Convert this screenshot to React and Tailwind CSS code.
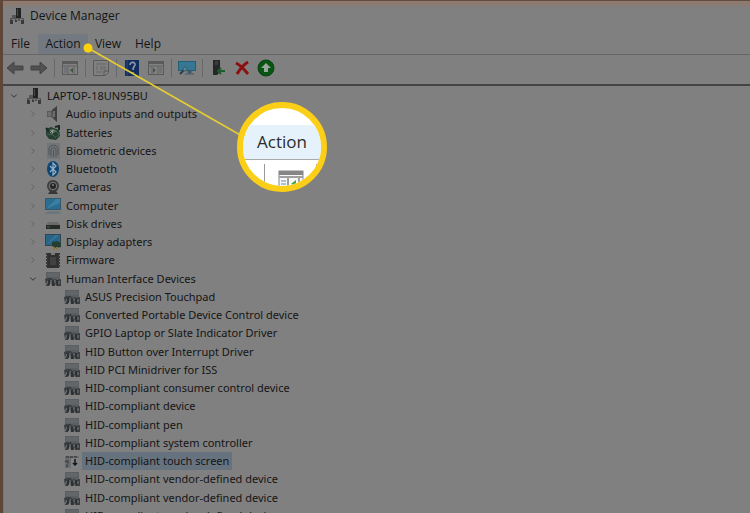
import { ChevronDown, ChevronRight } from 'lucide-react';

function DeviceIcon() {
  return (
    <svg viewBox="0 0 16 16" className="w-4 h-4 shrink-0">
      <rect x="7" y="0" width="5" height="10" fill="#222" />
      <rect x="8" y="1" width="1" height="7" fill="#4a4a4a" />
      <path d="M3 7h4v3H3zM1 10h14v3H1z" fill="#555" />
      <path d="M3 11h3v2H3zM7 11h2v2H7zM11 11h3v2h-3z" fill="#7a7a7a" />
      <path d="M1 12h3v4H1zM6 12h2v2H6zM12 12h3v4h-3z" fill="#3a3a3a" />
    </svg>
  );
}

function AudioIcon() {
  return (
    <svg viewBox="0 0 16 16" className="w-4 h-4">
      <path d="M2 5h4l6-5v16l-6-5H2z" fill="#5a5a5a" />
      <path d="M7 4l5-4v16l-3-3z" fill="#3f3f3f" />
      <path d="M3 6h3v4H3z" fill="#6e6e6e" />
      <path d="M9 5v6" stroke="#6c6c6c" strokeWidth="2" />
    </svg>
  );
}

function BatteryIcon() {
  return (
    <svg viewBox="0 0 16 16" className="w-4 h-4">
      <path d="M1 4l5-2 8 3 1 6-4 4-7-1-3-4z" fill="#263f31" />
      <path d="M3 5l5-1 4 2-4 2z" fill="#5a7565" />
      <path d="M2 9l6 1 3 3M11 6l3 3-2 3" fill="none" stroke="#466552" />
      <path d="M10 2l4-1v4M1 3l3 3" fill="none" stroke="#1c2a22" strokeWidth="2" />
      <path d="M5 8l3-3-1 4" fill="none" stroke="#98a29a" />
    </svg>
  );
}

function BiometricIcon() {
  return (
    <svg viewBox="0 0 16 16" className="w-4 h-4">
      <rect x="2" y="0" width="13" height="16" fill="#717577" />
      <path d="M4 12V6c0-5 9-5 9 0v6M6 14V7c0-3 5-3 5 0v7M8.5 7v7" fill="none" stroke="#505456" />
    </svg>
  );
}

function BluetoothIcon() {
  return (
    <svg viewBox="0 0 16 16" className="w-4 h-4">
      <ellipse cx="8" cy="8" rx="6" ry="8" fill="#0b4779" />
      <path d="M5 5l6 6-3 3V2l3 3-6 6" fill="none" stroke="#9eb0bd" strokeWidth="1.2" />
    </svg>
  );
}

function CameraIcon() {
  return (
    <svg viewBox="0 0 16 16" className="w-4 h-4">
      <path d="M5 12h6l2 3H3z" fill="#363636" />
      <circle cx="8" cy="7" r="6" fill="#3b3b3b" />
      <circle cx="8" cy="7" r="4.3" fill="#707070" />
      <circle cx="8" cy="7" r="3" fill="#252525" />
      <circle cx="8" cy="6" r="1" fill="#8a7b75" />
    </svg>
  );
}

function ComputerIcon() {
  return (
    <svg viewBox="0 0 18 16" className="w-[18px] h-4">
      <rect x="1" y="0" width="16" height="12" fill="#34576b" />
      <rect x="2" y="1" width="14" height="10" fill="#2b6c91" />
      <path d="M2 11l10-10h4v4z" fill="#3c7fa2" />
      <path d="M4 14h10M1 15h16" stroke="#5d717c" />
    </svg>
  );
}

function DiskIcon() {
  return (
    <svg viewBox="0 0 16 16" className="w-4 h-4">
      <path d="M3 6h10l2 3H1z" fill="#6b6b6b" />
      <rect x="1" y="9" width="14" height="4" fill="#262b28" />
      <path d="M2 11h3" stroke="#42694e" />
    </svg>
  );
}

function DisplayIcon() {
  return (
    <svg viewBox="0 0 18 16" className="w-[18px] h-4">
      <rect x="1" y="0" width="16" height="12" fill="#30464f" />
      <rect x="2" y="1" width="14" height="10" fill="#286487" />
      <path d="M2 11l10-10h3z" fill="#3d7a99" />
      <path d="M8 8l5-1 4 2v4l-5 1-4-2z" fill="#243f32" />
      <path d="M10 13v3M13 13v3" stroke="#88763f" strokeWidth="2" />
    </svg>
  );
}

function FirmwareIcon() {
  return (
    <svg viewBox="0 0 16 16" className="w-4 h-4">
      <rect x="2" y="1" width="12" height="15" fill="#303030" />
      <path d="M2 1v15M14 1v15" stroke="#383838" strokeWidth="2" strokeDasharray="2 1" />
      <path d="M6 1h4v2H6z" fill="#777" />
      <path d="M5 5h6v8H5z" fill="#414141" />
    </svg>
  );
}

function HidIcon() {
  return (
    <svg viewBox="0 0 16 16" className="w-4 h-4">
      <path d="M1 1h14v8H1z" fill="#5a5e60" />
      <path d="M2 3h12M2 5h12" stroke="#6a6f72" />
      <path d="M0 8l3-1h4l1 2 2-1 2 1 4-1v7h-4l-1-3-1 3H7l-1-4-2 4H1z" fill="#3a3e41" />
      <path d="M1 14l2-4M6 9v4M10 9v3M14 10v3" stroke="#777b7e" />
      <path d="M4 9v5M8 10v5M12 9v6" stroke="#222527" />
    </svg>
  );
}

function HidDisabledIcon() {
  return (
    <svg viewBox="0 0 16 16" className="w-4 h-4">
      <path d="M1 3h14v12H1z" fill="#6b6e71" />
      <path d="M2 4h12M1 9l3-2v4l-2 4" fill="none" stroke="#484b4e" strokeWidth="2" strokeDasharray="3 1" />
      <rect x="7" y="5" width="8" height="10" fill="#808284" />
      <path d="M11 6v6M9 10l2 2 2-2" fill="none" stroke="#151515" strokeWidth="1.5" />
    </svg>
  );
}

function ArrowIcon({ flip }) {
  return (
    <svg viewBox="0 0 18 16" className={flip ? 'w-[18px] h-4 -scale-x-100' : 'w-[18px] h-4'}>
      <path d="M1 8l7-6v4h9v4H8v4z" fill="#515151" stroke="#424242" />
    </svg>
  );
}

function WindowIcon({ flip }) {
  return (
    <svg viewBox="0 0 18 16" className={flip ? 'w-[18px] h-4 -scale-x-100' : 'w-[18px] h-4'}>
      <rect x="1.5" y="1.5" width="15" height="13" fill="#808080" stroke="#5a5a5a" />
      <path d="M2 3h14" stroke="#5b5b5b" strokeWidth="2" />
      <path d="M7 6v8M13 6v8M2 6h14" stroke="#626262" />
      <path d="M3 8h3M3 10h3M3 12h3" stroke="#5b666f" />
      <path d="M12 8v5L9 10z" fill="#3f5844" />
    </svg>
  );
}

function PropertiesIcon() {
  return (
    <svg viewBox="0 0 18 16" className="w-[18px] h-4">
      <path d="M1.5 0.5h15v12l-3 3h-12z" fill="#808080" stroke="#595959" />
      <path d="M4 4h10M4 7h2M8 7h6M4 9h2M8 9h6M4 12h6" stroke="#666" />
      <path d="M12 15v-4h4" fill="none" stroke="#555" />
    </svg>
  );
}

function HelpIcon() {
  return (
    <svg viewBox="0 0 16 16" className="w-4 h-4">
      <rect x="1" y="0" width="14" height="16" fill="#102d5d" />
      <path d="M3 0v16" stroke="#2f4f7b" />
      <path d="M6 5c0-4 6-3 5 0-1 2-2 2-2 5M9 12v2" fill="none" stroke="#8f9aac" strokeWidth="1.6" />
    </svg>
  );
}

function ScanIcon() {
  return (
    <svg viewBox="0 0 18 16" className="w-[18px] h-4">
      <rect x="0" y="1" width="18" height="10" fill="#245e78" />
      <rect x="1" y="2" width="16" height="8" fill="#347894" />
      <path d="M10 11h3v2h-3zM7 14h9" stroke="#405862" fill="#405862" />
      <path d="M2 14l5-5" stroke="#293f4d" strokeWidth="2" />
      <circle cx="7" cy="9" r="2" fill="#5d8798" stroke="#385b6c" />
    </svg>
  );
}

function UpdateIcon() {
  return (
    <svg viewBox="0 0 16 16" className="w-4 h-4">
      <path d="M3 0h7v12l-3 3H3z" fill="#272727" />
      <path d="M5 2h3M5 4h3" stroke="#555" />
      <path d="M15 11H9M11 8l-3 3 3 3" fill="none" stroke="#1d5a2c" strokeWidth="2" />
    </svg>
  );
}

function RemoveIcon() {
  return (
    <svg viewBox="0 0 16 16" className="w-4 h-4">
      <path d="M2 3c4 2 8 6 12 11M14 2C9 5 6 9 3 14" fill="none" stroke="#8b1010" strokeWidth="3" />
    </svg>
  );
}

function EnableIcon() {
  return (
    <svg viewBox="0 0 18 18" className="w-[18px] h-[18px]">
      <circle cx="9" cy="9" r="8" fill="#075413" stroke="#0a430f" />
      <path d="M9 4l5 5h-3v4H7V9H4z" fill="#9aa69b" />
    </svg>
  );
}

const toolbar = [
  [
    { label: 'Back', icon: <ArrowIcon /> },
    { label: 'Forward', icon: <ArrowIcon flip /> },
  ],
  [{ label: 'Show console tree', icon: <WindowIcon /> }],
  [{ label: 'Properties', icon: <PropertiesIcon /> }],
  [
    { label: 'Help', icon: <HelpIcon /> },
    { label: 'Show action pane', icon: <WindowIcon flip /> },
  ],
  [{ label: 'Scan for hardware changes', icon: <ScanIcon /> }],
  [
    { label: 'Update driver', icon: <UpdateIcon /> },
    { label: 'Uninstall device', icon: <RemoveIcon /> },
    { label: 'Enable device', icon: <EnableIcon /> },
  ],
];

const categories = [
  { name: 'Audio inputs and outputs', icon: <AudioIcon /> },
  { name: 'Batteries', icon: <BatteryIcon /> },
  { name: 'Biometric devices', icon: <BiometricIcon /> },
  { name: 'Bluetooth', icon: <BluetoothIcon /> },
  { name: 'Cameras', icon: <CameraIcon /> },
  { name: 'Computer', icon: <ComputerIcon /> },
  { name: 'Disk drives', icon: <DiskIcon /> },
  { name: 'Display adapters', icon: <DisplayIcon /> },
  { name: 'Firmware', icon: <FirmwareIcon /> },
  { name: 'Human Interface Devices', icon: <HidIcon />, open: true },
];

const hidDevices = [
  'ASUS Precision Touchpad',
  'Converted Portable Device Control device',
  'GPIO Laptop or Slate Indicator Driver',
  'HID Button over Interrupt Driver',
  'HID PCI Minidriver for ISS',
  'HID-compliant consumer control device',
  'HID-compliant device',
  'HID-compliant pen',
  'HID-compliant system controller',
  'HID-compliant touch screen',
  'HID-compliant vendor-defined device',
  'HID-compliant vendor-defined device',
  'HID-compliant vendor-defined device',
];

function Toggle({ open, name }) {
  return (
    <button aria-label={`Toggle ${name}`} className="w-3 mr-1 flex justify-center">
      {open ? (
        <ChevronDown className="w-[10px] h-[10px] text-[#252525]" />
      ) : (
        <ChevronRight className="w-[10px] h-[10px] text-[#5c5c5c]" />
      )}
    </button>
  );
}

function DeviceTree() {
  return (
    <ul className="grid auto-rows-fr h-[438px] mt-px font-['Noto_Sans',sans-serif] text-[11px]">
      <li className="flex items-center pl-1">
        <Toggle open name="LAPTOP-18UN95BU" />
        <span className="w-5 flex justify-center mr-[3px]"><DeviceIcon /></span>
        <span>LAPTOP-18UN95BU</span>
      </li>
      {categories.map((category) => (
        <li key={category.name} className="flex items-center pl-[23px]">
          <Toggle open={category.open} name={category.name} />
          <span className="w-5 flex justify-center mr-[3px]">{category.icon}</span>
          <span>{category.name}</span>
        </li>
      ))}
      {hidDevices.map((name, i) => {
        const selected = name === 'HID-compliant touch screen';
        return (
          <li key={i} className="flex items-stretch pl-[58px]">
            <span className="w-5 flex items-center justify-center">
              {selected ? <HidDisabledIcon /> : <HidIcon />}
            </span>
            <span className={`flex items-center px-[3px] ${selected ? 'bg-[#66737f]' : ''}`}>{name}</span>
          </li>
        );
      })}
    </ul>
  );
}

function Callout() {
  return (
    <div className="absolute inset-y-0 -left-[3px] right-0 pointer-events-none">
      <svg width="340" height="200" className="absolute left-0 top-0">
        <path d="M88 48L242 136" stroke="#e3cb35" strokeWidth="1.8" />
        <circle cx="88" cy="48" r="4.5" fill="#fdd20b" />
      </svg>
      <div className="absolute left-[237px] top-[102px] w-[90px] h-[90px] rounded-full border-6 border-[#fbce17] bg-white overflow-hidden">
        <div className="h-[17px]" />
        <div className="h-[35px] flex items-center justify-center bg-[#e5f2fc] border-b border-[#aaa] text-[17px] text-[#2b2b2b]">
          Action
        </div>
        <div className="flex justify-between pl-[21px] pr-1">
          <span className="w-px h-7 mt-1 bg-[#999]" />
          <svg viewBox="0 0 26 24" className="w-[26px] h-6 mt-[10px]">
            <rect x="1" y="1" width="24" height="22" fill="#f7f7f7" stroke="#858585" />
            <path d="M1 3h24" stroke="#858585" strokeWidth="4" />
            <path d="M1 7h24M10 7v16M21 7v16" stroke="#a0a0a0" strokeWidth="2" />
            <path d="M3 11h5M3 14h5M3 17h5" stroke="#5a8dbb" />
            <path d="M18 10v7l-5-3z" fill="#3ca63c" />
          </svg>
          <span className="w-px h-7 mt-1 bg-[#999]" />
        </div>
      </div>
    </div>
  );
}

export default function App() {
  return (
    <div className="relative h-screen overflow-hidden flex flex-col bg-[#808080] border-l-3 border-[#5e4638] font-['Open_Sans',sans-serif] text-[12px] leading-4 text-[#151515]">
      <header className="h-[34px] shrink-0 flex items-center gap-[5px] pl-[6px] pb-[3px] border-t border-t-[#654b3e] bg-linear-to-b from-[#8d7a70] from-10% to-[#808080] to-20%">
        <DeviceIcon />
        <h1>Device Manager</h1>
      </header>

      <nav className="h-5 shrink-0 flex items-stretch">
        <button className="w-[35px]">File</button>
        <button className="w-[50px] bg-[#737980]">Action</button>
        <button className="w-10">View</button>
        <button className="w-10">Help</button>
      </nav>

      <div className="h-8 shrink-0 flex items-center pb-1 border-t border-t-[#666] border-b-2 border-b-[#444]">
        {toolbar.map((group, i) => (
          <div key={i} className="flex items-center">
            {i > 0 && <span className="w-px h-[18px] mx-[3px] bg-[#686868]" />}
            {group.map((item) => (
              <button key={item.label} aria-label={item.label} className="w-6 flex justify-center">
                {item.icon}
              </button>
            ))}
          </div>
        ))}
      </div>

      <main className="flex-1 min-h-0 overflow-hidden border-l border-l-[#72777b]">
        <DeviceTree />
      </main>
      <Callout />
    </div>
  );
}
